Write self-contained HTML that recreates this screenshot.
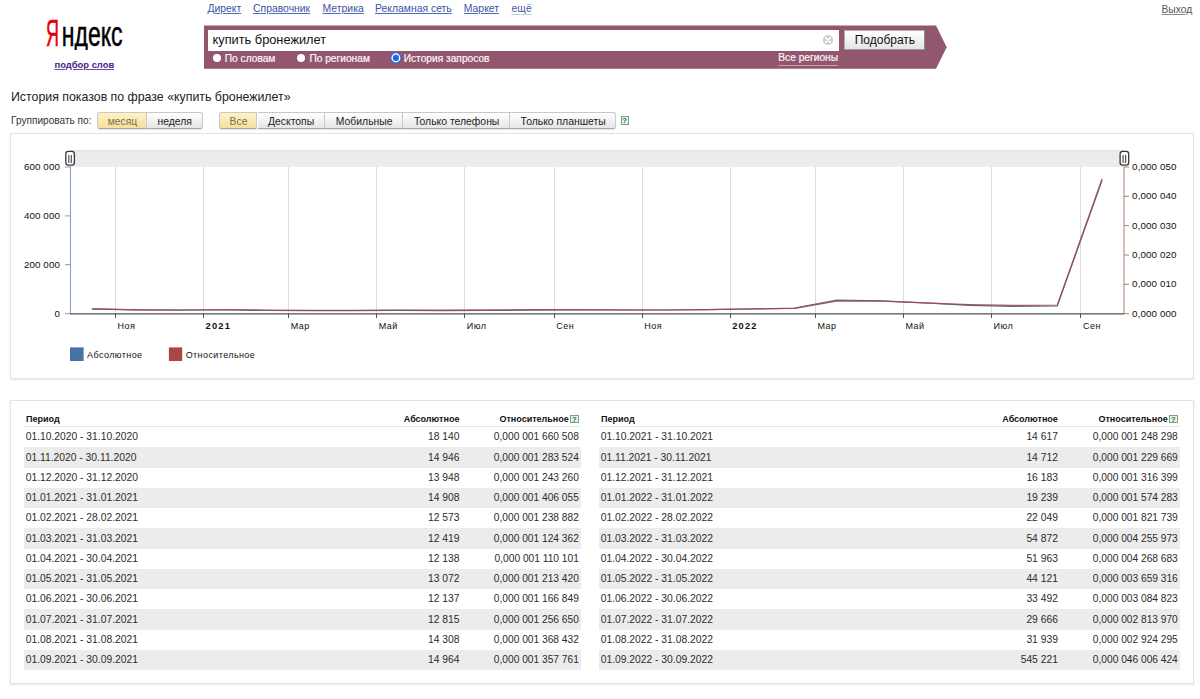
<!DOCTYPE html>
<html><head><meta charset="utf-8"><style>
html,body{margin:0;padding:0;background:#fff;width:1200px;height:699px;overflow:hidden;position:relative;font-family:"Liberation Sans", sans-serif;}
.t{position:absolute;line-height:1;white-space:nowrap;}
.a{position:absolute;}
u{text-decoration:none;}
</style></head><body>
<div class="t" style="left:207.40px;top:3.90px;font-size:10.4px;color:#3f52a0;font-weight:400;text-decoration:underline;text-decoration-color:#4a6ad0;text-underline-offset:0.6px;">Директ</div>
<div class="t" style="left:253.00px;top:3.90px;font-size:10.4px;color:#3f52a0;font-weight:400;text-decoration:underline;text-decoration-color:#4a6ad0;text-underline-offset:0.6px;">Справочник</div>
<div class="t" style="left:322.60px;top:3.90px;font-size:10.4px;color:#3f52a0;font-weight:400;text-decoration:underline;text-decoration-color:#4a6ad0;text-underline-offset:0.6px;">Метрика</div>
<div class="t" style="left:375.00px;top:3.90px;font-size:10.4px;color:#3f52a0;font-weight:400;text-decoration:underline;text-decoration-color:#4a6ad0;text-underline-offset:0.6px;">Рекламная сеть</div>
<div class="t" style="left:463.80px;top:3.90px;font-size:10.4px;color:#3f52a0;font-weight:400;text-decoration:underline;text-decoration-color:#4a6ad0;text-underline-offset:0.6px;">Маркет</div>
<div class="t" style="left:511.60px;top:3.90px;font-size:10.4px;color:#4a5aa5;font-weight:400;text-decoration:underline;text-decoration-color:#c2cce0;text-underline-offset:2.2px;">ещё</div>
<div class="t" style="left:1161.50px;top:4.68px;font-size:10.3px;color:#555;font-weight:400;text-decoration:underline;text-decoration-color:#888;text-underline-offset:1.3px;">Выход</div>
<svg class="a" style="left:0;top:0" width="200" height="80"><text x="46" y="46.2" font-family="Liberation Sans" font-size="36.5" textLength="13" lengthAdjust="spacingAndGlyphs" fill="#e8000b" stroke="#e8000b" stroke-width="0.6">Я</text><text x="61.8" y="46.2" font-family="Liberation Sans" font-size="34.5" textLength="60.8" lengthAdjust="spacingAndGlyphs" fill="#000" stroke="#000" stroke-width="0.5">ндекс</text><rect x="60" y="50" width="40" height="10" fill="#fff"/></svg>
<div class="t" style="left:54.60px;top:59.84px;font-size:9.4px;color:#43257f;font-weight:700;text-decoration:underline;text-decoration-color:#6a45c8;text-underline-offset:1px;">подбор слов</div>
<svg class="a" style="left:0;top:0" width="1200" height="80"><path d="M204,25.5 H936 L946.7,47.2 L936,68.7 H204 Z" fill="#93566f"/></svg>
<div class="a" style="left:208px;top:30px;width:631px;height:21px;background:#fff;"></div>
<svg class="a" style="left:817.8px;top:29.8px" width="20" height="20"><circle cx="10" cy="10" r="5.1" fill="#cdcdcd"/><path d="M7.8,7.8 L12.2,12.2 M12.2,7.8 L7.8,12.2" stroke="#fff" stroke-width="1.7" stroke-linecap="round"/></svg>
<div class="a" style="left:844px;top:30px;width:81.3px;height:19.6px;border:1px solid #b0b0b0;border-right-color:#8a8a8a;border-bottom-color:#999;border-radius:1px;background:linear-gradient(#ffffff,#e4e4e4);box-sizing:border-box;"></div>
<div class="t" style="left:212.50px;top:34.16px;font-size:12.8px;color:#111;font-weight:400;">купить бронежилет</div>
<div class="t" style="left:854.70px;top:33.84px;font-size:12px;color:#111;font-weight:400;">Подобрать</div>
<div class="a" style="left:212.5px;top:53.8px;width:8px;height:8px;border-radius:50%;background:#fff;"></div>
<div class="t" style="left:224.75px;top:54.27px;font-size:10.2px;color:#fdf6fa;font-weight:400;-webkit-text-stroke:0.2px #fdf6fa;">По словам</div>
<div class="a" style="left:296.9px;top:53.8px;width:8px;height:8px;border-radius:50%;background:#fff;"></div>
<div class="t" style="left:309.40px;top:54.27px;font-size:10.2px;color:#fdf6fa;font-weight:400;-webkit-text-stroke:0.2px #fdf6fa;">По регионам</div>
<svg class="a" style="left:385px;top:48px" width="20" height="20"><circle cx="10.9" cy="9.9" r="5.1" fill="#fff" stroke="#2a62d0" stroke-width="1.1"/><circle cx="10.9" cy="9.9" r="3.1" fill="#1a6af0"/></svg>
<div class="t" style="left:403.70px;top:54.27px;font-size:10.2px;color:#fdf6fa;font-weight:400;-webkit-text-stroke:0.2px #fdf6fa;">История запросов</div>
<div class="t" style="left:778.30px;top:53.17px;font-size:10.2px;color:#fdf6fa;font-weight:400;text-decoration:underline;text-decoration-color:#c7a3b4;text-underline-offset:3.5px;-webkit-text-stroke:0.2px #fdf6fa;">Все регионы</div>
<div class="t" style="left:11.00px;top:90.85px;font-size:12.35px;color:#222;font-weight:400;">История показов по фразе «купить бронежилет»</div>
<div class="t" style="left:11.00px;top:116.45px;font-size:10.1px;color:#333;font-weight:400;">Группировать по:</div>
<div class="a" style="left:97px;top:112px;width:50px;height:17.3px;box-sizing:border-box;border:1px solid #c8c8c8;border-bottom-color:#a9a9a9;border-radius:3px 0 0 3px;background:linear-gradient(#fdf3c6,#f5e09c);box-shadow:0 1px 0 rgba(0,0,0,0.10);"></div>
<div class="a" style="left:147px;top:112px;width:55.5px;height:17.3px;box-sizing:border-box;border:1px solid #c8c8c8;border-bottom-color:#a9a9a9;border-left:none;border-radius:0 3px 3px 0;background:linear-gradient(#ffffff,#e6e6e6);box-shadow:0 1px 0 rgba(0,0,0,0.10);"></div>
<div class="t" style="left:107.70px;top:117.08px;font-size:10.3px;color:#7d6f4c;font-weight:400;">месяц</div>
<div class="t" style="left:157.50px;top:117.00px;font-size:10.4px;color:#222;font-weight:400;">неделя</div>
<div class="a" style="left:219.3px;top:112px;width:38.19999999999999px;height:17.3px;box-sizing:border-box;border:1px solid #c8c8c8;border-bottom-color:#a9a9a9;border-radius:3px 0 0 3px;background:linear-gradient(#fdf3c6,#f5e09c);box-shadow:0 1px 0 rgba(0,0,0,0.10);"></div>
<div class="t" style="left:229.50px;top:117.00px;font-size:10.4px;color:#7d6f4c;font-weight:400;">Все</div>
<div class="a" style="left:257.5px;top:112px;width:67.89999999999998px;height:17.3px;box-sizing:border-box;border:1px solid #c8c8c8;border-bottom-color:#a9a9a9;border-left:none;border-radius:0;background:linear-gradient(#ffffff,#e6e6e6);box-shadow:0 1px 0 rgba(0,0,0,0.10);"></div>
<div class="t" style="left:268.00px;top:117.00px;font-size:10.4px;color:#222;font-weight:400;">Десктопы</div>
<div class="a" style="left:325.4px;top:112px;width:78.0px;height:17.3px;box-sizing:border-box;border:1px solid #c8c8c8;border-bottom-color:#a9a9a9;border-left:none;border-radius:0;background:linear-gradient(#ffffff,#e6e6e6);box-shadow:0 1px 0 rgba(0,0,0,0.10);"></div>
<div class="t" style="left:335.80px;top:117.00px;font-size:10.4px;color:#222;font-weight:400;">Мобильные</div>
<div class="a" style="left:403.4px;top:112px;width:107.0px;height:17.3px;box-sizing:border-box;border:1px solid #c8c8c8;border-bottom-color:#a9a9a9;border-left:none;border-radius:0;background:linear-gradient(#ffffff,#e6e6e6);box-shadow:0 1px 0 rgba(0,0,0,0.10);"></div>
<div class="t" style="left:414.00px;top:117.00px;font-size:10.4px;color:#222;font-weight:400;">Только телефоны</div>
<div class="a" style="left:510.4px;top:112px;width:106.0px;height:17.3px;box-sizing:border-box;border:1px solid #c8c8c8;border-bottom-color:#a9a9a9;border-left:none;border-radius:0 3px 3px 0;background:linear-gradient(#ffffff,#e6e6e6);box-shadow:0 1px 0 rgba(0,0,0,0.10);"></div>
<div class="t" style="left:520.60px;top:117.00px;font-size:10.4px;color:#222;font-weight:400;">Только планшеты</div>
<div class="a" style="left:620.6px;top:116.2px;width:8.5px;height:8.5px;box-sizing:border-box;border:1px solid #74a282;background:#e6f3e6;"></div>
<div class="t" style="left:622.30px;top:117.25px;font-size:7.5px;color:#2d6a3d;font-weight:700;">?</div>
<div class="a" style="left:10px;top:133px;width:1184px;height:245.5px;box-sizing:border-box;border:1px solid #e2e2e2;box-shadow:0 1px 2px rgba(0,0,0,0.10);background:#fff;"></div>
<svg class="a" style="left:0;top:0" width="1200" height="400"><rect x="70" y="150" width="1054" height="17" fill="#ececec"/><rect x="70" y="150" width="1054" height="1" fill="#e3e3e3"/><line x1="115.5" y1="167" x2="115.5" y2="313" stroke="#dcdcdc" stroke-width="1"/><line x1="115.5" y1="313.5" x2="115.5" y2="318" stroke="#555" stroke-width="1"/><line x1="203.5" y1="167" x2="203.5" y2="313" stroke="#dcdcdc" stroke-width="1"/><line x1="203.5" y1="313.5" x2="203.5" y2="318" stroke="#555" stroke-width="1"/><line x1="288.5" y1="167" x2="288.5" y2="313" stroke="#dcdcdc" stroke-width="1"/><line x1="288.5" y1="313.5" x2="288.5" y2="318" stroke="#555" stroke-width="1"/><line x1="376.5" y1="167" x2="376.5" y2="313" stroke="#dcdcdc" stroke-width="1"/><line x1="376.5" y1="313.5" x2="376.5" y2="318" stroke="#555" stroke-width="1"/><line x1="464.5" y1="167" x2="464.5" y2="313" stroke="#dcdcdc" stroke-width="1"/><line x1="464.5" y1="313.5" x2="464.5" y2="318" stroke="#555" stroke-width="1"/><line x1="554.5" y1="167" x2="554.5" y2="313" stroke="#dcdcdc" stroke-width="1"/><line x1="554.5" y1="313.5" x2="554.5" y2="318" stroke="#555" stroke-width="1"/><line x1="642.5" y1="167" x2="642.5" y2="313" stroke="#dcdcdc" stroke-width="1"/><line x1="642.5" y1="313.5" x2="642.5" y2="318" stroke="#555" stroke-width="1"/><line x1="730.5" y1="167" x2="730.5" y2="313" stroke="#dcdcdc" stroke-width="1"/><line x1="730.5" y1="313.5" x2="730.5" y2="318" stroke="#555" stroke-width="1"/><line x1="815.5" y1="167" x2="815.5" y2="313" stroke="#dcdcdc" stroke-width="1"/><line x1="815.5" y1="313.5" x2="815.5" y2="318" stroke="#555" stroke-width="1"/><line x1="903.5" y1="167" x2="903.5" y2="313" stroke="#dcdcdc" stroke-width="1"/><line x1="903.5" y1="313.5" x2="903.5" y2="318" stroke="#555" stroke-width="1"/><line x1="991.5" y1="167" x2="991.5" y2="313" stroke="#dcdcdc" stroke-width="1"/><line x1="991.5" y1="313.5" x2="991.5" y2="318" stroke="#555" stroke-width="1"/><line x1="1080.5" y1="167" x2="1080.5" y2="313" stroke="#dcdcdc" stroke-width="1"/><line x1="1080.5" y1="313.5" x2="1080.5" y2="318" stroke="#555" stroke-width="1"/><polyline points="91.9,309.2 136.7,309.9 180.0,310.2 224.7,310.0 268.0,310.5 309.8,310.6 354.6,310.6 397.9,310.4 442.6,310.6 485.9,310.5 530.6,310.1 575.4,309.9 618.6,310.0 663.4,310.0 706.7,309.6 751.4,308.9 794.7,308.2 836.5,300.2 881.3,300.9 924.6,302.8 969.3,305.4 1012.6,306.4 1057.3,305.8 1102.1,180.4" fill="none" stroke="#4572a7" stroke-width="1.2"/><polyline points="91.9,308.7 136.7,309.8 180.0,310.0 224.7,309.5 268.0,310.0 309.8,310.3 354.6,310.3 397.9,310.0 442.6,310.2 485.9,309.9 530.6,309.6 575.4,309.6 618.6,309.9 663.4,310.0 706.7,309.7 751.4,309.0 794.7,308.3 836.5,301.1 881.3,301.1 924.6,302.9 969.3,304.6 1012.6,305.3 1057.3,305.0 1102.1,178.7" fill="none" stroke="#aa4643" stroke-width="1.2" stroke-opacity="0.9"/><line x1="70.5" y1="167" x2="70.5" y2="314" stroke="#7f9cc8" stroke-width="1"/><line x1="65" y1="313.6" x2="70.5" y2="313.6" stroke="#7f9cc8" stroke-width="1"/><line x1="65" y1="264.7" x2="70.5" y2="264.7" stroke="#7f9cc8" stroke-width="1"/><line x1="65" y1="215.9" x2="70.5" y2="215.9" stroke="#7f9cc8" stroke-width="1"/><line x1="65" y1="167.0" x2="70.5" y2="167.0" stroke="#7f9cc8" stroke-width="1"/><line x1="1124" y1="167" x2="1124" y2="314" stroke="#b07a7a" stroke-width="1"/><line x1="1124" y1="313.6" x2="1129" y2="313.6" stroke="#b07a7a" stroke-width="1"/><line x1="1124" y1="284.3" x2="1129" y2="284.3" stroke="#b07a7a" stroke-width="1"/><line x1="1124" y1="255.0" x2="1129" y2="255.0" stroke="#b07a7a" stroke-width="1"/><line x1="1124" y1="225.6" x2="1129" y2="225.6" stroke="#b07a7a" stroke-width="1"/><line x1="1124" y1="196.3" x2="1129" y2="196.3" stroke="#b07a7a" stroke-width="1"/><line x1="1124" y1="167.0" x2="1129" y2="167.0" stroke="#b07a7a" stroke-width="1"/><line x1="70" y1="313.8" x2="1124" y2="313.8" stroke="#555" stroke-width="1.2"/><rect x="65.8" y="151.4" width="8.6" height="13.8" rx="2.6" fill="#fff" stroke="#3a3a3a" stroke-width="1.3"/><line x1="68.8" y1="155" x2="68.8" y2="163" stroke="#555" stroke-width="1.2"/><line x1="71.3" y1="155" x2="71.3" y2="163" stroke="#555" stroke-width="1.2"/><rect x="1120.1" y="151.4" width="8.6" height="13.8" rx="2.6" fill="#fff" stroke="#3a3a3a" stroke-width="1.3"/><line x1="1123.1" y1="155" x2="1123.1" y2="163" stroke="#555" stroke-width="1.2"/><line x1="1125.6" y1="155" x2="1125.6" y2="163" stroke="#555" stroke-width="1.2"/><rect x="70" y="347.4" width="13.6" height="13.6" fill="#4572a7"/><rect x="168.9" y="347.4" width="13.3" height="13.6" fill="#aa4643"/></svg>
<div class="t" style="left:-540.00px;width:600px;text-align:right;top:308.70px;font-size:9.8px;color:#111;font-weight:400;letter-spacing:0.1px;">0</div>
<div class="t" style="left:-540.00px;width:600px;text-align:right;top:259.84px;font-size:9.8px;color:#111;font-weight:400;letter-spacing:0.1px;">200 000</div>
<div class="t" style="left:-540.00px;width:600px;text-align:right;top:210.97px;font-size:9.8px;color:#111;font-weight:400;letter-spacing:0.1px;">400 000</div>
<div class="t" style="left:-540.00px;width:600px;text-align:right;top:162.10px;font-size:9.8px;color:#111;font-weight:400;letter-spacing:0.1px;">600 000</div>
<div class="t" style="left:1132.10px;top:308.70px;font-size:9.8px;color:#111;font-weight:400;letter-spacing:0.1px;">0,000 000</div>
<div class="t" style="left:1132.10px;top:279.38px;font-size:9.8px;color:#111;font-weight:400;letter-spacing:0.1px;">0,000 010</div>
<div class="t" style="left:1132.10px;top:250.06px;font-size:9.8px;color:#111;font-weight:400;letter-spacing:0.1px;">0,000 020</div>
<div class="t" style="left:1132.10px;top:220.74px;font-size:9.8px;color:#111;font-weight:400;letter-spacing:0.1px;">0,000 030</div>
<div class="t" style="left:1132.10px;top:191.42px;font-size:9.8px;color:#111;font-weight:400;letter-spacing:0.1px;">0,000 040</div>
<div class="t" style="left:1132.10px;top:162.10px;font-size:9.8px;color:#111;font-weight:400;letter-spacing:0.1px;">0,000 050</div>
<div class="t" style="left:117.53px;top:321.98px;font-size:9px;color:#111;font-weight:400;letter-spacing:0.5px;">Ноя</div>
<div class="t" style="left:205.56px;top:321.73px;font-size:9.3px;color:#111;font-weight:700;letter-spacing:1.2px;">2021</div>
<div class="t" style="left:290.70px;top:321.98px;font-size:9px;color:#111;font-weight:400;letter-spacing:0.5px;">Мар</div>
<div class="t" style="left:378.72px;top:321.98px;font-size:9px;color:#111;font-weight:400;letter-spacing:0.5px;">Май</div>
<div class="t" style="left:466.74px;top:321.98px;font-size:9px;color:#111;font-weight:400;letter-spacing:0.5px;">Июл</div>
<div class="t" style="left:556.21px;top:321.98px;font-size:9px;color:#111;font-weight:400;letter-spacing:0.5px;">Сен</div>
<div class="t" style="left:644.23px;top:321.98px;font-size:9px;color:#111;font-weight:400;letter-spacing:0.5px;">Ноя</div>
<div class="t" style="left:732.26px;top:321.73px;font-size:9.3px;color:#111;font-weight:700;letter-spacing:1.2px;">2022</div>
<div class="t" style="left:817.40px;top:321.98px;font-size:9px;color:#111;font-weight:400;letter-spacing:0.5px;">Мар</div>
<div class="t" style="left:905.42px;top:321.98px;font-size:9px;color:#111;font-weight:400;letter-spacing:0.5px;">Май</div>
<div class="t" style="left:993.44px;top:321.98px;font-size:9px;color:#111;font-weight:400;letter-spacing:0.5px;">Июл</div>
<div class="t" style="left:1082.91px;top:321.98px;font-size:9px;color:#111;font-weight:400;letter-spacing:0.5px;">Сен</div>
<div class="t" style="left:87.10px;top:351.08px;font-size:9px;color:#111;font-weight:400;letter-spacing:0.4px;">Абсолютное</div>
<div class="t" style="left:185.70px;top:351.08px;font-size:9px;color:#111;font-weight:400;letter-spacing:0.4px;">Относительное</div>
<div class="a" style="left:10px;top:400px;width:1184px;height:284px;box-sizing:border-box;border:1px solid #e2e2e2;box-shadow:0 1px 2px rgba(0,0,0,0.10);background:#fff;"></div>
<div class="t" style="left:26.00px;top:414.98px;font-size:9px;color:#111;font-weight:700;">Период</div>
<div class="t" style="left:-140.60px;width:600px;text-align:right;top:414.98px;font-size:9px;color:#111;font-weight:700;">Абсолютное</div>
<div class="t" style="left:-31.20px;width:600px;text-align:right;top:414.98px;font-size:9px;color:#111;font-weight:700;">Относительное</div>
<div class="a" style="left:570.3px;top:414.6px;width:8.5px;height:8.5px;box-sizing:border-box;border:1px solid #74a282;background:#e6f3e6;"></div>
<div class="t" style="left:572.00px;top:415.65px;font-size:7.5px;color:#2d6a3d;font-weight:700;">?</div>
<div class="a" style="left:24px;top:426.2px;width:556.7px;height:1px;background:#e6e6e6;"></div>
<div class="t" style="left:25.70px;top:432.38px;font-size:10.3px;color:#2b2b2b;font-weight:400;">01.10.2020 - 31.10.2020</div>
<div class="t" style="left:-140.60px;width:600px;text-align:right;top:432.38px;font-size:10.3px;color:#2b2b2b;font-weight:400;">18 140</div>
<div class="t" style="left:-21.20px;width:600px;text-align:right;top:432.47px;font-size:10.2px;color:#2b2b2b;font-weight:400;">0,000 001 660 508</div>
<div class="a" style="left:24px;top:447.25px;width:556.7px;height:20.25px;background:#ececec;"></div>
<div class="t" style="left:25.70px;top:452.63px;font-size:10.3px;color:#2b2b2b;font-weight:400;">01.11.2020 - 30.11.2020</div>
<div class="t" style="left:-140.60px;width:600px;text-align:right;top:452.63px;font-size:10.3px;color:#2b2b2b;font-weight:400;">14 946</div>
<div class="t" style="left:-21.20px;width:600px;text-align:right;top:452.72px;font-size:10.2px;color:#2b2b2b;font-weight:400;">0,000 001 283 524</div>
<div class="t" style="left:25.70px;top:472.88px;font-size:10.3px;color:#2b2b2b;font-weight:400;">01.12.2020 - 31.12.2020</div>
<div class="t" style="left:-140.60px;width:600px;text-align:right;top:472.88px;font-size:10.3px;color:#2b2b2b;font-weight:400;">13 948</div>
<div class="t" style="left:-21.20px;width:600px;text-align:right;top:472.97px;font-size:10.2px;color:#2b2b2b;font-weight:400;">0,000 001 243 260</div>
<div class="a" style="left:24px;top:487.75px;width:556.7px;height:20.25px;background:#ececec;"></div>
<div class="t" style="left:25.70px;top:493.13px;font-size:10.3px;color:#2b2b2b;font-weight:400;">01.01.2021 - 31.01.2021</div>
<div class="t" style="left:-140.60px;width:600px;text-align:right;top:493.13px;font-size:10.3px;color:#2b2b2b;font-weight:400;">14 908</div>
<div class="t" style="left:-21.20px;width:600px;text-align:right;top:493.22px;font-size:10.2px;color:#2b2b2b;font-weight:400;">0,000 001 406 055</div>
<div class="t" style="left:25.70px;top:513.38px;font-size:10.3px;color:#2b2b2b;font-weight:400;">01.02.2021 - 28.02.2021</div>
<div class="t" style="left:-140.60px;width:600px;text-align:right;top:513.38px;font-size:10.3px;color:#2b2b2b;font-weight:400;">12 573</div>
<div class="t" style="left:-21.20px;width:600px;text-align:right;top:513.47px;font-size:10.2px;color:#2b2b2b;font-weight:400;">0,000 001 238 882</div>
<div class="a" style="left:24px;top:528.25px;width:556.7px;height:20.25px;background:#ececec;"></div>
<div class="t" style="left:25.70px;top:533.63px;font-size:10.3px;color:#2b2b2b;font-weight:400;">01.03.2021 - 31.03.2021</div>
<div class="t" style="left:-140.60px;width:600px;text-align:right;top:533.63px;font-size:10.3px;color:#2b2b2b;font-weight:400;">12 419</div>
<div class="t" style="left:-21.20px;width:600px;text-align:right;top:533.72px;font-size:10.2px;color:#2b2b2b;font-weight:400;">0,000 001 124 362</div>
<div class="t" style="left:25.70px;top:553.88px;font-size:10.3px;color:#2b2b2b;font-weight:400;">01.04.2021 - 30.04.2021</div>
<div class="t" style="left:-140.60px;width:600px;text-align:right;top:553.88px;font-size:10.3px;color:#2b2b2b;font-weight:400;">12 138</div>
<div class="t" style="left:-21.20px;width:600px;text-align:right;top:553.97px;font-size:10.2px;color:#2b2b2b;font-weight:400;">0,000 001 110 101</div>
<div class="a" style="left:24px;top:568.75px;width:556.7px;height:20.25px;background:#ececec;"></div>
<div class="t" style="left:25.70px;top:574.13px;font-size:10.3px;color:#2b2b2b;font-weight:400;">01.05.2021 - 31.05.2021</div>
<div class="t" style="left:-140.60px;width:600px;text-align:right;top:574.13px;font-size:10.3px;color:#2b2b2b;font-weight:400;">13 072</div>
<div class="t" style="left:-21.20px;width:600px;text-align:right;top:574.22px;font-size:10.2px;color:#2b2b2b;font-weight:400;">0,000 001 213 420</div>
<div class="t" style="left:25.70px;top:594.38px;font-size:10.3px;color:#2b2b2b;font-weight:400;">01.06.2021 - 30.06.2021</div>
<div class="t" style="left:-140.60px;width:600px;text-align:right;top:594.38px;font-size:10.3px;color:#2b2b2b;font-weight:400;">12 137</div>
<div class="t" style="left:-21.20px;width:600px;text-align:right;top:594.47px;font-size:10.2px;color:#2b2b2b;font-weight:400;">0,000 001 166 849</div>
<div class="a" style="left:24px;top:609.25px;width:556.7px;height:20.25px;background:#ececec;"></div>
<div class="t" style="left:25.70px;top:614.63px;font-size:10.3px;color:#2b2b2b;font-weight:400;">01.07.2021 - 31.07.2021</div>
<div class="t" style="left:-140.60px;width:600px;text-align:right;top:614.63px;font-size:10.3px;color:#2b2b2b;font-weight:400;">12 815</div>
<div class="t" style="left:-21.20px;width:600px;text-align:right;top:614.72px;font-size:10.2px;color:#2b2b2b;font-weight:400;">0,000 001 256 650</div>
<div class="t" style="left:25.70px;top:634.88px;font-size:10.3px;color:#2b2b2b;font-weight:400;">01.08.2021 - 31.08.2021</div>
<div class="t" style="left:-140.60px;width:600px;text-align:right;top:634.88px;font-size:10.3px;color:#2b2b2b;font-weight:400;">14 308</div>
<div class="t" style="left:-21.20px;width:600px;text-align:right;top:634.97px;font-size:10.2px;color:#2b2b2b;font-weight:400;">0,000 001 368 432</div>
<div class="a" style="left:24px;top:649.75px;width:556.7px;height:20.25px;background:#ececec;"></div>
<div class="t" style="left:25.70px;top:655.13px;font-size:10.3px;color:#2b2b2b;font-weight:400;">01.09.2021 - 30.09.2021</div>
<div class="t" style="left:-140.60px;width:600px;text-align:right;top:655.13px;font-size:10.3px;color:#2b2b2b;font-weight:400;">14 964</div>
<div class="t" style="left:-21.20px;width:600px;text-align:right;top:655.22px;font-size:10.2px;color:#2b2b2b;font-weight:400;">0,000 001 357 761</div>
<div class="t" style="left:601.00px;top:414.98px;font-size:9px;color:#111;font-weight:700;">Период</div>
<div class="t" style="left:457.90px;width:600px;text-align:right;top:414.98px;font-size:9px;color:#111;font-weight:700;">Абсолютное</div>
<div class="t" style="left:567.80px;width:600px;text-align:right;top:414.98px;font-size:9px;color:#111;font-weight:700;">Относительное</div>
<div class="a" style="left:1169.3px;top:414.6px;width:8.5px;height:8.5px;box-sizing:border-box;border:1px solid #74a282;background:#e6f3e6;"></div>
<div class="t" style="left:1171.00px;top:415.65px;font-size:7.5px;color:#2d6a3d;font-weight:700;">?</div>
<div class="a" style="left:599px;top:426.2px;width:580.5px;height:1px;background:#e6e6e6;"></div>
<div class="t" style="left:600.70px;top:432.38px;font-size:10.3px;color:#2b2b2b;font-weight:400;">01.10.2021 - 31.10.2021</div>
<div class="t" style="left:457.90px;width:600px;text-align:right;top:432.38px;font-size:10.3px;color:#2b2b2b;font-weight:400;">14 617</div>
<div class="t" style="left:577.80px;width:600px;text-align:right;top:432.47px;font-size:10.2px;color:#2b2b2b;font-weight:400;">0,000 001 248 298</div>
<div class="a" style="left:599px;top:447.25px;width:580.5px;height:20.25px;background:#ececec;"></div>
<div class="t" style="left:600.70px;top:452.63px;font-size:10.3px;color:#2b2b2b;font-weight:400;">01.11.2021 - 30.11.2021</div>
<div class="t" style="left:457.90px;width:600px;text-align:right;top:452.63px;font-size:10.3px;color:#2b2b2b;font-weight:400;">14 712</div>
<div class="t" style="left:577.80px;width:600px;text-align:right;top:452.72px;font-size:10.2px;color:#2b2b2b;font-weight:400;">0,000 001 229 669</div>
<div class="t" style="left:600.70px;top:472.88px;font-size:10.3px;color:#2b2b2b;font-weight:400;">01.12.2021 - 31.12.2021</div>
<div class="t" style="left:457.90px;width:600px;text-align:right;top:472.88px;font-size:10.3px;color:#2b2b2b;font-weight:400;">16 183</div>
<div class="t" style="left:577.80px;width:600px;text-align:right;top:472.97px;font-size:10.2px;color:#2b2b2b;font-weight:400;">0,000 001 316 399</div>
<div class="a" style="left:599px;top:487.75px;width:580.5px;height:20.25px;background:#ececec;"></div>
<div class="t" style="left:600.70px;top:493.13px;font-size:10.3px;color:#2b2b2b;font-weight:400;">01.01.2022 - 31.01.2022</div>
<div class="t" style="left:457.90px;width:600px;text-align:right;top:493.13px;font-size:10.3px;color:#2b2b2b;font-weight:400;">19 239</div>
<div class="t" style="left:577.80px;width:600px;text-align:right;top:493.22px;font-size:10.2px;color:#2b2b2b;font-weight:400;">0,000 001 574 283</div>
<div class="t" style="left:600.70px;top:513.38px;font-size:10.3px;color:#2b2b2b;font-weight:400;">01.02.2022 - 28.02.2022</div>
<div class="t" style="left:457.90px;width:600px;text-align:right;top:513.38px;font-size:10.3px;color:#2b2b2b;font-weight:400;">22 049</div>
<div class="t" style="left:577.80px;width:600px;text-align:right;top:513.47px;font-size:10.2px;color:#2b2b2b;font-weight:400;">0,000 001 821 739</div>
<div class="a" style="left:599px;top:528.25px;width:580.5px;height:20.25px;background:#ececec;"></div>
<div class="t" style="left:600.70px;top:533.63px;font-size:10.3px;color:#2b2b2b;font-weight:400;">01.03.2022 - 31.03.2022</div>
<div class="t" style="left:457.90px;width:600px;text-align:right;top:533.63px;font-size:10.3px;color:#2b2b2b;font-weight:400;">54 872</div>
<div class="t" style="left:577.80px;width:600px;text-align:right;top:533.72px;font-size:10.2px;color:#2b2b2b;font-weight:400;">0,000 004 255 973</div>
<div class="t" style="left:600.70px;top:553.88px;font-size:10.3px;color:#2b2b2b;font-weight:400;">01.04.2022 - 30.04.2022</div>
<div class="t" style="left:457.90px;width:600px;text-align:right;top:553.88px;font-size:10.3px;color:#2b2b2b;font-weight:400;">51 963</div>
<div class="t" style="left:577.80px;width:600px;text-align:right;top:553.97px;font-size:10.2px;color:#2b2b2b;font-weight:400;">0,000 004 268 683</div>
<div class="a" style="left:599px;top:568.75px;width:580.5px;height:20.25px;background:#ececec;"></div>
<div class="t" style="left:600.70px;top:574.13px;font-size:10.3px;color:#2b2b2b;font-weight:400;">01.05.2022 - 31.05.2022</div>
<div class="t" style="left:457.90px;width:600px;text-align:right;top:574.13px;font-size:10.3px;color:#2b2b2b;font-weight:400;">44 121</div>
<div class="t" style="left:577.80px;width:600px;text-align:right;top:574.22px;font-size:10.2px;color:#2b2b2b;font-weight:400;">0,000 003 659 316</div>
<div class="t" style="left:600.70px;top:594.38px;font-size:10.3px;color:#2b2b2b;font-weight:400;">01.06.2022 - 30.06.2022</div>
<div class="t" style="left:457.90px;width:600px;text-align:right;top:594.38px;font-size:10.3px;color:#2b2b2b;font-weight:400;">33 492</div>
<div class="t" style="left:577.80px;width:600px;text-align:right;top:594.47px;font-size:10.2px;color:#2b2b2b;font-weight:400;">0,000 003 084 823</div>
<div class="a" style="left:599px;top:609.25px;width:580.5px;height:20.25px;background:#ececec;"></div>
<div class="t" style="left:600.70px;top:614.63px;font-size:10.3px;color:#2b2b2b;font-weight:400;">01.07.2022 - 31.07.2022</div>
<div class="t" style="left:457.90px;width:600px;text-align:right;top:614.63px;font-size:10.3px;color:#2b2b2b;font-weight:400;">29 666</div>
<div class="t" style="left:577.80px;width:600px;text-align:right;top:614.72px;font-size:10.2px;color:#2b2b2b;font-weight:400;">0,000 002 813 970</div>
<div class="t" style="left:600.70px;top:634.88px;font-size:10.3px;color:#2b2b2b;font-weight:400;">01.08.2022 - 31.08.2022</div>
<div class="t" style="left:457.90px;width:600px;text-align:right;top:634.88px;font-size:10.3px;color:#2b2b2b;font-weight:400;">31 939</div>
<div class="t" style="left:577.80px;width:600px;text-align:right;top:634.97px;font-size:10.2px;color:#2b2b2b;font-weight:400;">0,000 002 924 295</div>
<div class="a" style="left:599px;top:649.75px;width:580.5px;height:20.25px;background:#ececec;"></div>
<div class="t" style="left:600.70px;top:655.13px;font-size:10.3px;color:#2b2b2b;font-weight:400;">01.09.2022 - 30.09.2022</div>
<div class="t" style="left:457.90px;width:600px;text-align:right;top:655.13px;font-size:10.3px;color:#2b2b2b;font-weight:400;">545 221</div>
<div class="t" style="left:577.80px;width:600px;text-align:right;top:655.22px;font-size:10.2px;color:#2b2b2b;font-weight:400;">0,000 046 006 424</div>
</body></html>
